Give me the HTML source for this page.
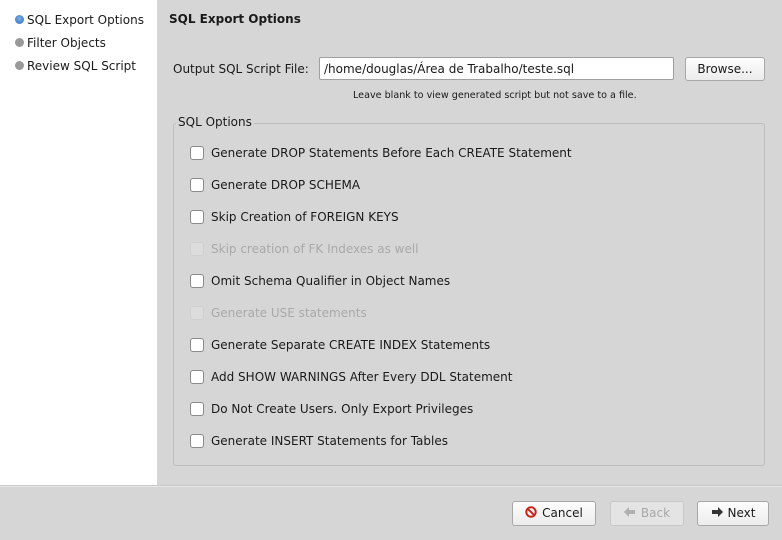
<!DOCTYPE html>
<html><head><style>
body{margin:0;width:782px;height:540px;background:#d6d6d6;font-family:"DejaVu Sans","Liberation Sans",sans-serif;font-size:12px;color:#1a1a1a;position:relative;overflow:hidden}
.abs{position:absolute}
.left{left:0;top:0;width:157px;height:485px;background:#fff}
.nav{position:absolute;left:15px;font-size:12px;white-space:nowrap}
.dot{display:inline-block;width:9px;height:9px;border-radius:50%;background:#999;margin-right:3px;vertical-align:0px}
.btn{position:absolute;height:24px;border:1px solid #a8a8a8;border-radius:3px;background:linear-gradient(#fdfdfd,#ececec);box-sizing:border-box;text-align:center;line-height:22px;font-size:12px}
.cb{position:absolute;left:190px;width:14px;height:14px;border:1px solid #8a8a8a;border-radius:3px;background:#fff;box-sizing:border-box}
.cb.d{background:#dcdcdc;border-color:#d0d0d0}
.lb{position:absolute;left:211px;white-space:nowrap}
.lb.d{color:#a9a9a9}
</style></head><body>
<div class="abs left"></div>
<div class="nav" style="top:13px"><span class="dot" style="background:radial-gradient(circle at 50% 40%,#7ab0e8,#2e6bb8)"></span>SQL Export Options</div>
<div class="nav" style="top:36px"><span class="dot"></span>Filter Objects</div>
<div class="nav" style="top:59px"><span class="dot"></span>Review SQL Script</div>
<div class="abs" style="left:169px;top:12px;font-weight:bold;font-size:12px">SQL Export Options</div>
<div class="abs" style="left:173px;top:62px">Output SQL Script File:</div>
<div class="abs" style="left:319px;top:57px;width:355px;height:23px;background:#fff;border:1px solid #a0a0a0;box-sizing:border-box;border-radius:2px;padding:4px 4px 2px;line-height:15px">/home/douglas/Área de Trabalho/teste.sql</div>
<div class="btn" style="left:685px;top:57px;width:80px">Browse...</div>
<div class="abs" style="left:353px;top:90px;font-size:9.6px">Leave blank to view generated script but not save to a file.</div>
<div class="abs" style="left:173px;top:123px;width:592px;height:343px;border:1px solid #bdbdbd;border-radius:3px;box-sizing:border-box"></div>
<div class="abs" style="left:176px;top:115px;background:#d6d6d6;padding:0 2px">SQL Options</div>
<div class="cb" style="top:146px"></div><div class="lb" style="top:146px">Generate DROP Statements Before Each CREATE Statement</div>
<div class="cb" style="top:178px"></div><div class="lb" style="top:178px">Generate DROP SCHEMA</div>
<div class="cb" style="top:210px"></div><div class="lb" style="top:210px">Skip Creation of FOREIGN KEYS</div>
<div class="cb d" style="top:242px"></div><div class="lb d" style="top:242px">Skip creation of FK Indexes as well</div>
<div class="cb" style="top:274px"></div><div class="lb" style="top:274px">Omit Schema Qualifier in Object Names</div>
<div class="cb d" style="top:306px"></div><div class="lb d" style="top:306px">Generate USE statements</div>
<div class="cb" style="top:338px"></div><div class="lb" style="top:338px">Generate Separate CREATE INDEX Statements</div>
<div class="cb" style="top:370px"></div><div class="lb" style="top:370px">Add SHOW WARNINGS After Every DDL Statement</div>
<div class="cb" style="top:402px"></div><div class="lb" style="top:402px">Do Not Create Users. Only Export Privileges</div>
<div class="cb" style="top:434px"></div><div class="lb" style="top:434px">Generate INSERT Statements for Tables</div>
<div class="abs" style="left:0;top:485px;width:782px;height:1px;background:#c8c8c8"></div>
<div class="abs" style="left:0;top:486px;width:782px;height:1px;background:#e8e8e8"></div>
<div class="btn" style="left:512px;top:501px;width:84px;height:25px"><svg width="12" height="12" viewBox="0 0 12 12" style="vertical-align:-1px;margin-right:5px"><circle cx="6" cy="6" r="4.7" fill="none" stroke="#c8281c" stroke-width="2"/><line x1="2.8" y1="2.8" x2="9.2" y2="9.2" stroke="#c8281c" stroke-width="2"/></svg>Cancel</div>
<div class="btn" style="left:610px;top:501px;width:74px;height:25px;color:#a8a8a8;border-color:#c8c8c8;background:#e4e4e4"><svg width="12" height="10" viewBox="0 0 12 10" style="vertical-align:0px;margin-right:5px"><path d="M0 5 L5 0 V3 H11 V7 H5 V10Z" fill="#b0b0b0"/></svg>Back</div>
<div class="btn" style="left:697px;top:501px;width:72px;height:25px"><svg width="12" height="10" viewBox="0 0 12 10" style="vertical-align:0px;margin-right:5px"><path d="M12 5 L7 0 V3 H1 V7 H7 V10Z" fill="#333"/></svg>Next</div>
</body></html>
